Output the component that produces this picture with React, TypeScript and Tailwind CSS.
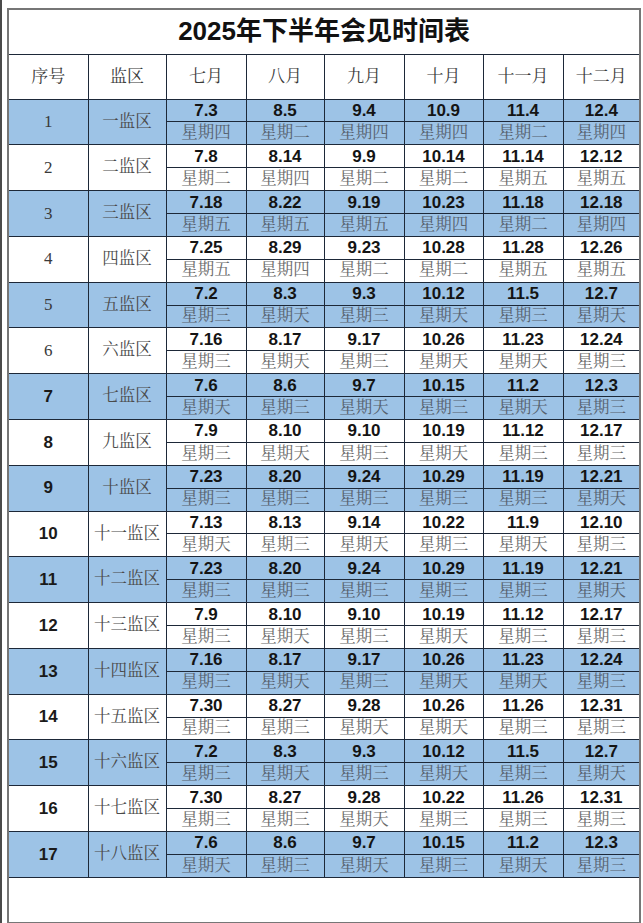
import { Fragment } from "react";

const months = ["七月", "八月", "九月", "十月", "十一月", "十二月"];

// each cell: date followed by the weekday character
const rows = [
  { no: "1", area: "一监区", cells: "7.3四 8.5二 9.4四 10.9四 11.4二 12.4四" },
  { no: "2", area: "二监区", cells: "7.8二 8.14四 9.9二 10.14二 11.14五 12.12五" },
  { no: "3", area: "三监区", cells: "7.18五 8.22五 9.19五 10.23四 11.18二 12.18四" },
  { no: "4", area: "四监区", cells: "7.25五 8.29四 9.23二 10.28二 11.28五 12.26五" },
  { no: "5", area: "五监区", cells: "7.2三 8.3天 9.3三 10.12天 11.5三 12.7天" },
  { no: "6", area: "六监区", cells: "7.16三 8.17天 9.17三 10.26天 11.23天 12.24三" },
  { no: "7", area: "七监区", cells: "7.6天 8.6三 9.7天 10.15三 11.2天 12.3三" },
  { no: "8", area: "九监区", cells: "7.9三 8.10天 9.10三 10.19天 11.12三 12.17三" },
  { no: "9", area: "十监区", cells: "7.23三 8.20三 9.24三 10.29三 11.19三 12.21天" },
  { no: "10", area: "十一监区", cells: "7.13天 8.13三 9.14天 10.22三 11.9天 12.10三" },
  { no: "11", area: "十二监区", cells: "7.23三 8.20三 9.24三 10.29三 11.19三 12.21天" },
  { no: "12", area: "十三监区", cells: "7.9三 8.10天 9.10三 10.19天 11.12三 12.17三" },
  { no: "13", area: "十四监区", cells: "7.16三 8.17天 9.17三 10.26天 11.23天 12.24三" },
  { no: "14", area: "十五监区", cells: "7.30三 8.27三 9.28天 10.26天 11.26三 12.31三" },
  { no: "15", area: "十六监区", cells: "7.2三 8.3天 9.3三 10.12天 11.5三 12.7天" },
  { no: "16", area: "十七监区", cells: "7.30三 8.27三 9.28天 10.22三 11.26三 12.31三" },
  { no: "17", area: "十八监区", cells: "7.6天 8.6三 9.7天 10.15三 11.2天 12.3三" },
];

const serif = "font-['Liberation_Serif','Noto_Serif_CJK_SC','Noto_Sans_CJK_SC',serif]";
const sans = "font-['Liberation_Sans','Noto_Sans_CJK_SC',sans-serif]";

const App = () => {
  return (
    <div className="w-[643px] h-[923px] bg-white border-l-2 border-[#4a4a4a] pl-[5px] pt-[8px]">
      <div className="w-[634px] border-2 border-[#767676]">
        <table className="table-fixed border-collapse w-[630px]">
          <colgroup>
            <col className="w-[79px]" />
            <col className="w-[78px]" />
            <col className="w-[80px]" />
            <col className="w-[78px]" />
            <col className="w-[80px]" />
            <col className="w-[79px]" />
            <col className="w-[80px]" />
            <col className="w-[76px]" />
          </colgroup>
          <tbody>
            {/* Title */}
            <tr className="h-[44px]">
              <td
                colSpan={8}
                className={`border-b-[1.5px] border-[#1d2838] text-center text-[26px] font-bold text-[#111] ${sans}`}
              >
                2025年下半年会见时间表
              </td>
            </tr>

            {/* Header */}
            <tr className="h-[45px]">
              {["序号", "监区", ...months].map((h, i) => (
                <td
                  key={h}
                  className={`border-[1.5px] border-[#1d2838] ${i === 0 ? "border-l-0" : ""} ${
                    i === 7 ? "border-r-0" : ""
                  } text-center text-[17px] text-[#3a3a3a] ${serif}`}
                >
                  {h}
                </td>
              ))}
            </tr>

            {/* Data rows */}
            {rows.map((r, idx) => {
              const blue = idx % 2 === 0;
              const bg = blue ? "bg-[#9dc3e6]" : "bg-white";
              const cells = r.cells.split(" ").map((c) => ({ date: c.slice(0, -1), day: c.slice(-1) }));
              const boldNo = idx >= 6;
              return (
                <Fragment key={r.no}>
                  <tr className={`h-[22.9px] ${bg}`}>
                    <td
                      rowSpan={2}
                      className={`border-[1.5px] border-l-0 border-[#1d2838] text-center ${
                        boldNo
                          ? `text-[17px] font-bold text-[#1a1a1a] ${sans}`
                          : `text-[17px] text-[#3a3a3a] ${serif}`
                      }`}
                    >
                      {r.no}
                    </td>
                    <td
                      rowSpan={2}
                      className={`border-[1.5px] border-[#1d2838] text-center text-[16.5px] whitespace-nowrap text-[#4a4a4a] ${serif}`}
                    >
                      {r.area}
                    </td>
                    {cells.map((c, i) => (
                      <td
                        key={i}
                        className={`border-[1.5px] border-[#1d2838] ${i === 5 ? "border-r-0" : ""} p-0 text-center align-middle leading-none text-[17px] font-bold text-[#141414] ${sans}`}
                      >
                        {c.date}
                      </td>
                    ))}
                  </tr>
                  <tr className={`h-[22.9px] ${bg}`}>
                    {cells.map((c, i) => (
                      <td
                        key={i}
                        className={`border-[1.5px] border-[#1d2838] ${i === 5 ? "border-r-0" : ""} p-0 text-center align-middle leading-none text-[16.5px] ${
                          blue ? "text-[#56616e]" : "text-[#6a6a6a]"
                        } ${serif}`}
                      >
                        星期{c.day}
                      </td>
                    ))}
                  </tr>
                </Fragment>
              );
            })}

            {/* Empty bottom row */}
            <tr className="h-[45px]">
              <td colSpan={8} className="border-t-[1.5px] border-[#1d2838]" />
            </tr>
          </tbody>
        </table>
      </div>
    </div>
  );
};

export default App;
